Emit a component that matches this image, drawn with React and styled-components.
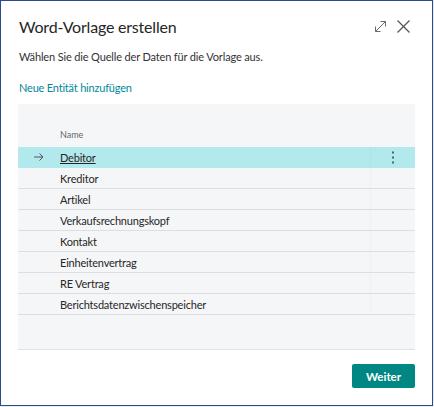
import React from "react"
import styled, { createGlobalStyle } from 'styled-components'

const GlobalStyle = createGlobalStyle`
    html, body {
        margin: 0;
        padding: 0;
        background: #e9edf3;
        font-family: "Segoe UI", Lato, "Open Sans", sans-serif;
    }
`

const rows = [
    'Debitor',
    'Kreditor',
    'Artikel',
    'Verkaufsrechnungskopf',
    'Kontakt',
    'Einheitenvertrag',
    'RE Vertrag',
    'Berichtsdatenzwischenspeicher',
]

export default function App() {
    const selected = 0

    return (
        <>
            <GlobalStyle />
            <Dialog>
                <Header>
                    <Title>Word-Vorlage erstellen</Title>
                    <Actions>
                        <IconButton aria-label="Maximieren">
                            <svg width="13" height="13" viewBox="0 0 13 13" fill="none" stroke="#6a6a6a" strokeWidth="1">
                                <path d="M1.5 11.5 L11.5 1.5" />
                                <path d="M6.5 1.5 H11.5 V6.5" />
                                <path d="M1.5 6.5 V11.5 H6.5" />
                            </svg>
                        </IconButton>
                        <IconButton aria-label="Schließen">
                            <svg width="13" height="13" viewBox="0 0 13 13" fill="none" stroke="#555" strokeWidth="1.2">
                                <path d="M0.5 0.5 L12.5 12.5" />
                                <path d="M12.5 0.5 L0.5 12.5" />
                            </svg>
                        </IconButton>
                    </Actions>
                </Header>
                <Subtitle>Wählen Sie die Quelle der Daten für die Vorlage aus.</Subtitle>
                <Link>Neue Entität hinzufügen</Link>
                <Panel>
                    <HeadRow>
                        <Cell />
                        <HeadCell>Name</HeadCell>
                        <Cell />
                    </HeadRow>
                    {rows.map((name, index) => {
                        const isSel = index === selected
                        return (
                            <Row key={name} selected={isSel}>
                                <Cell>
                                    {isSel ? (
                                        <svg width="10" height="8" viewBox="0 0 10 8" fill="none" stroke="#555" strokeWidth="1">
                                            <path d="M0 4 H9" />
                                            <path d="M5.5 0.5 L9 4 L5.5 7.5" />
                                        </svg>
                                    ) : null}
                                </Cell>
                                <NameCell selected={isSel}>{name}</NameCell>
                                <MenuCell>
                                    {isSel ? (
                                        <svg width="4" height="13" viewBox="0 0 4 13" fill="#4f6470">
                                            <rect x="1" y="0.5" width="2" height="2" />
                                            <rect x="1" y="5.5" width="2" height="2" />
                                            <rect x="1" y="10.5" width="2" height="2" />
                                        </svg>
                                    ) : null}
                                </MenuCell>
                            </Row>
                        )
                    })}
                    <Filler />
                </Panel>
                <Footer>
                    <Button>Weiter</Button>
                </Footer>
            </Dialog>
        </>
    )
}


const Dialog = styled.div`
    box-sizing: border-box;
    width: 433px;
    height: 406px;
    background: #fff;
    border: 1.5px solid #2a4a8a;
    padding: 0 17px 0 17px;
    display: flex;
    flex-direction: column;
`
const Header = styled.div`
    display: flex;
    align-items: center;
    justify-content: space-between;
    height: 46px;
    padding-left: 1px;
    padding-top: 2px;
`
const Title = styled.h1`
    margin: 0;
    font-size: 16px;
    letter-spacing: -0.2px;
    font-weight: 400;
    color: #262626;
`
const Actions = styled.div`
    display: flex;
    gap: 10px;
    margin-right: 5px;
`
const IconButton = styled.span`
    display: flex;
    width: 13px;
    height: 13px;
`
const Subtitle = styled.p`
    margin: 0;
    padding-left: 1px;
    line-height: 16px;
    font-size: 11px;
    letter-spacing: -0.15px;
    color: #333;
`
const Link = styled.a`
    display: block;
    margin-top: 15px;
    padding-left: 1px;
    line-height: 16px;
    font-size: 11px;
    letter-spacing: -0.2px;
    color: #00889a;
    cursor: pointer;
`
const Panel = styled.div`
    margin-top: 8px;
    background: #f5f6f8;
    display: flex;
    flex-direction: column;
    height: 245px;
    border-bottom: 1px solid #dfe1e4;
`
const HeadRow = styled.div`
    display: grid;
    grid-template-columns: 42px 1fr 45px;
    height: 43px;
    align-items: end;
`
const Row = styled.div`
    display: grid;
    grid-template-columns: 42px 1fr 45px;
    height: 21px;
    align-items: center;
    background: ${({ selected }) => selected ? '#b2e9ec' : 'transparent'};
    border-bottom: 1px solid ${({ selected }) => selected ? '#b2e9ec' : '#dcdee1'};
    box-sizing: border-box;
`
const Cell = styled.div`
    display: flex;
    align-items: center;
    justify-content: center;
    height: 100%;
`
const HeadCell = styled.div`
    font-size: 9px;
    color: #666;
    padding-bottom: 7px;
`
const NameCell = styled.div`
    font-size: 11px;
    letter-spacing: -0.2px;
    color: #262626;
    text-decoration: ${({ selected }) => selected ? 'underline' : 'none'};
`
const MenuCell = styled.div`
    display: flex;
    align-items: center;
    justify-content: center;
    height: 100%;
    border-left: 1px solid rgba(0, 0, 0, 0.02);
`
const Filler = styled.div`
    flex: 1;
`
const Footer = styled.div`
    display: flex;
    justify-content: flex-end;
    padding-top: 14px;
`
const Button = styled.button`
    width: 63px;
    height: 24px;
    border: none;
    border-radius: 2px;
    background: #008784;
    color: #fff;
    font-family: inherit;
    font-weight: 700;
    font-size: 11.5px;
    cursor: pointer;
`
